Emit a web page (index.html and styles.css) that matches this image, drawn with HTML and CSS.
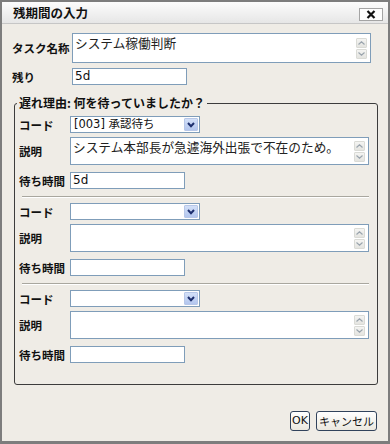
FILE: index.html
```html
<!DOCTYPE html>
<html lang="ja">
<head>
    <meta charset="UTF-8">
    <meta name="viewport" content="width=device-width, initial-scale=1.0">
    <title>残期間の入力</title>
    <link rel="stylesheet" href="styles.css">
</head>
<body>

    <div class="dialog">
        <div class="titlebar">
            <span class="title">残期間の入力</span>
            <div class="close">
                <svg width="10" height="9" viewBox="0 0 10 9"><path d="M1.5 1 L8.5 8 M8.5 1 L1.5 8" stroke="#111" stroke-width="2.2"/></svg>
            </div>
        </div>

        <div class="content">
            <div class="row">
                <span class="label">タスク名称</span>
                <div class="textarea wide">
                    <span class="text">システム稼働判断</span>
                    <div class="scroll">
                        <div class="sbtn"><svg width="7" height="4" viewBox="0 0 7 4"><path d="M0.5 3.5 L3.5 0.8 L6.5 3.5" fill="none" stroke="#9aa4ad" stroke-width="1.2"/></svg></div>
                        <div class="sbtn"><svg width="7" height="4" viewBox="0 0 7 4"><path d="M0.5 0.5 L3.5 3.2 L6.5 0.5" fill="none" stroke="#9aa4ad" stroke-width="1.2"/></svg></div>
                    </div>
                </div>
            </div>
            <div class="row gap5">
                <span class="label">残り</span>
                <div class="input">5d</div>
            </div>

            <fieldset class="reasons">
                <legend>遅れ理由: 何を待っていましたか？</legend>

                <div class="block">
                    <div class="row">
                        <span class="label sm">コード</span>
                        <div class="select"><span class="text">[003] 承認待ち</span><div class="arrow"><svg width="8" height="6" viewBox="0 0 8 6"><path d="M1 1 L4 4.2 L7 1" fill="none" stroke="#1d2f6e" stroke-width="2"/></svg></div></div>
                    </div>
                    <div class="row gap4">
                        <span class="label sm">説明</span>
                        <div class="textarea">
                            <span class="text">システム本部長が急遽海外出張で不在のため。</span>
                            <div class="scroll">
                                <div class="sbtn"><svg width="7" height="4" viewBox="0 0 7 4"><path d="M0.5 3.5 L3.5 0.8 L6.5 3.5" fill="none" stroke="#9aa4ad" stroke-width="1.2"/></svg></div>
                                <div class="sbtn"><svg width="7" height="4" viewBox="0 0 7 4"><path d="M0.5 0.5 L3.5 3.2 L6.5 0.5" fill="none" stroke="#9aa4ad" stroke-width="1.2"/></svg></div>
                            </div>
                        </div>
                    </div>
                    <div class="row gap7">
                        <span class="label sm">待ち時間</span>
                        <div class="input">5d</div>
                    </div>
                </div>
                <hr class="sep">

                <div class="block">
                    <div class="row">
                        <span class="label sm">コード</span>
                        <div class="select"><span class="text"></span><div class="arrow"><svg width="8" height="6" viewBox="0 0 8 6"><path d="M1 1 L4 4.2 L7 1" fill="none" stroke="#1d2f6e" stroke-width="2"/></svg></div></div>
                    </div>
                    <div class="row gap4">
                        <span class="label sm">説明</span>
                        <div class="textarea">
                            <span class="text"></span>
                            <div class="scroll">
                                <div class="sbtn"><svg width="7" height="4" viewBox="0 0 7 4"><path d="M0.5 3.5 L3.5 0.8 L6.5 3.5" fill="none" stroke="#9aa4ad" stroke-width="1.2"/></svg></div>
                                <div class="sbtn"><svg width="7" height="4" viewBox="0 0 7 4"><path d="M0.5 0.5 L3.5 3.2 L6.5 0.5" fill="none" stroke="#9aa4ad" stroke-width="1.2"/></svg></div>
                            </div>
                        </div>
                    </div>
                    <div class="row gap7">
                        <span class="label sm">待ち時間</span>
                        <div class="input"></div>
                    </div>
                </div>
                <hr class="sep">

                <div class="block">
                    <div class="row">
                        <span class="label sm">コード</span>
                        <div class="select"><span class="text"></span><div class="arrow"><svg width="8" height="6" viewBox="0 0 8 6"><path d="M1 1 L4 4.2 L7 1" fill="none" stroke="#1d2f6e" stroke-width="2"/></svg></div></div>
                    </div>
                    <div class="row gap4">
                        <span class="label sm">説明</span>
                        <div class="textarea">
                            <span class="text"></span>
                            <div class="scroll">
                                <div class="sbtn"><svg width="7" height="4" viewBox="0 0 7 4"><path d="M0.5 3.5 L3.5 0.8 L6.5 3.5" fill="none" stroke="#9aa4ad" stroke-width="1.2"/></svg></div>
                                <div class="sbtn"><svg width="7" height="4" viewBox="0 0 7 4"><path d="M0.5 0.5 L3.5 3.2 L6.5 0.5" fill="none" stroke="#9aa4ad" stroke-width="1.2"/></svg></div>
                            </div>
                        </div>
                    </div>
                    <div class="row gap7">
                        <span class="label sm">待ち時間</span>
                        <div class="input"></div>
                    </div>
                </div>
            </fieldset>

            <div class="actions">
                <div class="btn ok">OK</div>
                <div class="btn">キャンセル</div>
            </div>
        </div>
    </div>

</body>
</html>
```

FILE: styles.css
```css
* {
    box-sizing: border-box;
}
body {
    margin: 0;
    font-family: "Noto Sans CJK JP", sans-serif;
    font-size: 12px;
    color: #111;
    background: #fff;
}
.dialog {
    width: 390px;
    height: 444px;
    border: 2px solid #7d7d7d;
    border-bottom-width: 3px;
    background: #efece6;
    display: flex;
    flex-direction: column;
}
.titlebar {
    height: 22px;
    display: flex;
    align-items: center;
    justify-content: space-between;
    padding: 0 5px 0 11px;
    background: linear-gradient(#fcfcfc, #e6e6e6);
    border-bottom: 1px solid #c6c6c6;
}
.title {
    font-weight: bold;
    font-size: 12.5px;
    line-height: 16px;
}
.close {
    width: 24px;
    height: 13px;
    margin-top: 4px;
    border: 1px solid #a4a4a4;
    background: #fdfdfd;
    display: flex;
    align-items: center;
    justify-content: center;
}
.content {
    flex: 1;
    display: flex;
    flex-direction: column;
    padding: 9px 10px 10px 10px;
}
.row {
    display: flex;
    align-items: center;
}
.gap4 { margin-top: 4px; }
.gap5 { margin-top: 5px; }
.gap7 { margin-top: 7px; }
.label {
    width: 60px;
    flex-shrink: 0;
    font-weight: bold;
    font-size: 11.5px;
    line-height: 14px;
}
.label.sm {
    width: 51px;
}
.textarea {
    width: 299px;
    height: 28px;
    border: 1px solid #7f9db9;
    background: #fff;
    display: flex;
    justify-content: space-between;
    padding: 0 3px 0 2px;
}
.textarea.wide {
    height: 30px;
}
.textarea .text {
    font-size: 12.7px;
    line-height: 16px;
    padding-top: 1px;
    color: #222;
}
.scroll {
    display: flex;
    flex-direction: column;
    justify-content: center;
    gap: 1px;
}
.sbtn {
    width: 11px;
    height: 10px;
    border: 1px solid #dadbd6;
    border-radius: 1px;
    background: linear-gradient(#f4f4f2, #e4e4e0);
    display: flex;
    align-items: center;
    justify-content: center;
}
.input {
    width: 115px;
    height: 17px;
    border: 1px solid #7f9db9;
    background: #fff;
    padding-left: 2px;
    font-family: "DejaVu Sans", "Noto Sans CJK JP", sans-serif;
    font-size: 12px;
    line-height: 15px;
}
.select {
    width: 130px;
    height: 17px;
    border: 1px solid #7f9db9;
    background: #fff;
    display: flex;
    justify-content: space-between;
    align-items: center;
    padding: 0 1px 0 3px;
    font-family: "DejaVu Sans", "Noto Sans CJK JP", sans-serif;
    font-size: 11.5px;
    line-height: 15px;
}
.arrow {
    width: 14px;
    height: 13px;
    border: 1px solid #b7c7e8;
    border-radius: 1px;
    background: linear-gradient(#d3e0f8, #b3c6ee);
    display: flex;
    align-items: center;
    justify-content: center;
}
.reasons {
    margin: 10px 0 0 2px;
    width: 364px;
    border: 1px solid #3c3c3c;
    border-radius: 3px;
    padding: 5px 0 21px 4px;
}
.reasons legend {
    font-weight: bold;
    font-size: 12px;
    line-height: 16px;
    padding: 0 2px;
    margin-left: -2px;
}
.sep {
    height: 0;
    border: 0;
    border-top: 1px solid #a9a79f;
    border-bottom: 1px solid #fff;
    margin: 7px 8px 5px 3px;
}
.actions {
    margin-top: auto;
    display: flex;
    justify-content: flex-end;
    gap: 6px;
    padding-right: 1px;
}
.btn {
    height: 20px;
    padding: 0 2px;
    border: 1px solid #31435c;
    border-radius: 3px;
    background: linear-gradient(#ffffff, #ebe8df);
    font-size: 11px;
    line-height: 18px;
}
.btn.ok {
    width: 20px;
    padding: 0;
    text-align: center;
    font-family: "DejaVu Sans", sans-serif;
    font-size: 11px;
}
```
